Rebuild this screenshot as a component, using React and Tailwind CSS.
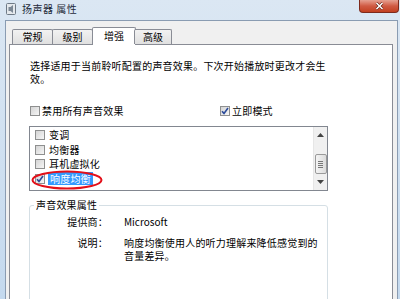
import React from 'react';

const font = "font-['Noto_Sans_CJK_SC','Microsoft_YaHei',sans-serif]";

const CheckBox = ({ checked }) => (
  <span className="w-[10px] h-[10px] shrink-0 border border-[#8e8f8f] bg-white flex items-center justify-center">
    <span className="w-[8px] h-[8px] bg-gradient-to-br from-[#d4d4d4] to-[#f6f6f6] flex items-center justify-center">
      {checked && (
        <svg width="8" height="8" viewBox="0 0 8 8">
          <path d="M1 4.2 L3 6.4 L7 1" fill="none" stroke="#2a4a9a" strokeWidth="1.6" />
        </svg>
      )}
    </span>
  </span>
);

const tabs = [
  { label: '常规', w: 'w-[41px]' },
  { label: '级别', w: 'w-[41px]' },
  { label: '增强', w: 'w-[44px]', active: true },
  { label: '高级', w: 'w-[38px]' },
];

const items = ['变调', '均衡器', '耳机虚拟化'];

export default function App() {
  return (
    <div className={`w-[400px] h-[299px] overflow-hidden bg-gradient-to-b from-[#dbe7f3] to-[#c4d9ee] text-[10px] leading-[12px] text-black flex flex-col ${font}`}>
      {/* TITLE BAR */}
      <div className="h-[20px] shrink-0 flex items-start">
        <div className="w-[22px] flex justify-center pt-[3px]">
          <svg width="10" height="12" viewBox="0 0 10 12">
            <rect x="0.5" y="0.5" width="9" height="11" rx="1" fill="#e4e8ec" stroke="#6f7a86" />
            <path d="M2.5 4 h2 l2.5 -2 v8 l-2.5 -2 h-2 z" fill="#7b8794" />
          </svg>
        </div>
        <span className="mt-[3px] text-[10px] tracking-[0.5px] text-[#1e2a3a]">扬声器 属性</span>
        <div className="ml-auto mr-px w-[40px] h-[13px] rounded-b-[4px] border border-t-0 border-[#7d2a1c] bg-gradient-to-b from-[#e5a091] via-[#d05a43] to-[#c2401f] flex items-center justify-center">
          <svg width="9" height="8" viewBox="0 0 9 8">
            <path d="M1.5 1 L7.5 7 M7.5 1 L1.5 7" stroke="#5a1a10" strokeWidth="2.6" />
            <path d="M1.5 1 L7.5 7 M7.5 1 L1.5 7" stroke="#ffffff" strokeWidth="1.6" />
          </svg>
        </div>
      </div>

      {/* WINDOW BODY */}
      <div className="flex-1 ml-[5px] mr-[2px] border border-b-0 border-[#8a9cb2] bg-[#f0f0f0] pl-[3px] pr-[4px] pt-[6px] flex flex-col min-h-0">
        <div className="relative z-10 h-[17px] flex items-end pl-[3px]">
          {tabs.map((t) =>
            t.active ? (
              <div key={t.label} className={`${t.w} -mx-[1px] -mb-px h-[18px] bg-white border border-b-0 border-[#898c95] rounded-t-[2px] flex items-center justify-center pb-[2px]`}>
                {t.label}
              </div>
            ) : (
              <div key={t.label} className={`${t.w} h-[15px] -ml-px first:ml-0 bg-gradient-to-b from-[#f2f2f2] to-[#e0e0e0] border border-b-0 border-[#898c95] rounded-t-[2px] flex items-center justify-center`}>
                {t.label}
              </div>
            )
          )}
        </div>

        <div className="flex-1 bg-white border border-b-0 border-[#898c95] pl-[19px] pt-[15px] min-h-0">
          <p className="ml-px tracking-[0.2px] whitespace-nowrap leading-[12.5px]">
            选择适用于当前聆听配置的声音效果。下次开始播放时更改才会生
            <br />
            效。
          </p>

          <div className="mt-[20px] ml-px flex items-center h-[12px]">
            <div className="w-[190px] flex items-center gap-[2px]">
              <CheckBox />
              <span className="tracking-[0.2px]">禁用所有声音效果</span>
            </div>
            <div className="flex items-center gap-[2px]">
              <CheckBox checked />
              <span className="tracking-[0.2px]">立即模式</span>
            </div>
          </div>

          {/* LIST BOX */}
          <div className="relative mt-[9px] w-[299px] h-[65px] border border-[#828790] flex">
            <div className="flex-1 pl-[5px] pt-px">
              {items.map((it) => (
                <div key={it} className="h-[14.5px] flex items-center gap-[4px]">
                  <CheckBox />
                  <span className="tracking-[0.2px]">{it}</span>
                </div>
              ))}
              <div className="h-[14.5px] flex items-center gap-[3px]">
                <CheckBox checked />
                <span className="bg-[#3399ff] text-white px-[2px] h-[13px] flex items-center tracking-[0.2px]">响度均衡</span>
              </div>
            </div>
            <div className="w-[14px] bg-[#f0f0f0] border-l border-[#e6e6e6] flex flex-col items-center">
              <div className="h-[16px] flex items-center justify-center">
                <svg width="7" height="4" viewBox="0 0 7 4"><path d="M0 4 L3.5 0 L7 4 z" fill="#444" /></svg>
              </div>
              <div className="mt-[11px] w-[12px] h-[20px] rounded-[2px] border border-[#9a9a9a] bg-gradient-to-r from-[#f4f4f4] to-[#dcdcdc] flex flex-col items-center justify-center gap-[1px]">
                <span className="w-[5px] h-px bg-[#777]" />
                <span className="w-[5px] h-px bg-[#777]" />
                <span className="w-[5px] h-px bg-[#777]" />
                <span className="w-[5px] h-px bg-[#777]" />
              </div>
              <div className="flex-1 flex items-center justify-center">
                <svg width="7" height="4" viewBox="0 0 7 4"><path d="M0 0 L3.5 4 L7 0 z" fill="#444" /></svg>
              </div>
            </div>
            <svg className="absolute left-[1px] top-[43px] pointer-events-none" width="72" height="20" viewBox="0 0 72 20">
              <ellipse cx="36" cy="10" rx="34.5" ry="8.6" fill="none" stroke="#e3101a" strokeWidth="2" />
            </svg>
          </div>

          {/* GROUP BOX */}
          <fieldset className="mt-[8px] w-[299px] h-[120px] border border-[#d5dfe5] rounded-[3px] px-0 pt-[5px]">
            <legend className="ml-[4px] px-[2px] tracking-[0.2px]">声音效果属性</legend>
            <div className="grid grid-cols-[78px_1fr] gap-x-[16px] gap-y-[9px]">
              <span className="text-right tracking-[0.2px]">提供商：</span>
              <span>Microsoft</span>
              <span className="text-right tracking-[0.2px]">说明：</span>
              <span className="tracking-[0.2px] whitespace-nowrap leading-[12.5px]">
                响度均衡使用人的听力理解来降低感觉到的
                <br />
                音量差异。
              </span>
            </div>
          </fieldset>
        </div>
      </div>
    </div>
  );
}
